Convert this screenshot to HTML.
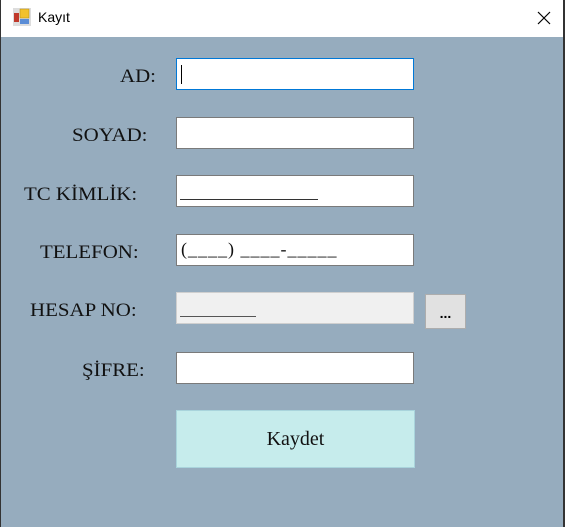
<!DOCTYPE html>
<html><head><style>
*{margin:0;padding:0;box-sizing:border-box}
body{width:565px;height:527px;overflow:hidden;background:#96acbe;position:relative;font-family:"Liberation Serif",serif}
.frame{position:absolute;left:0;top:0;width:565px;height:527px;border-left:1px solid #333;border-right:2px solid #333}
.title{position:absolute;left:0;top:0;width:565px;height:37px;background:#fff;border-left:1px solid #333;border-right:2px solid #333}
.title span{position:absolute;left:37px;top:9px;font:14px "Liberation Sans",sans-serif;color:#000}
.lbl{position:absolute;font-size:19px;color:#111;transform:scaleX(1.1);transform-origin:left top;white-space:nowrap}
.tb{position:absolute;left:176px;width:238px;height:32px;background:#fff;border:1px solid #7a7a7a}
.mask{position:absolute;left:4px;font-size:18px;color:#111;font-family:"Liberation Serif",serif;letter-spacing:1px;white-space:nowrap}
</style></head><body>
<div class="frame"></div>
<div class="title">
<svg style="position:absolute;left:12px;top:8px" width="18" height="18" viewBox="0 0 18 18">
<rect x="0" y="0" width="18" height="18" fill="#ddd"/>
<rect x="7" y="1" width="9" height="9" fill="#f2c12e" stroke="#b08a10" stroke-width="0.5"/>
<rect x="1" y="5" width="5" height="9" fill="#c0392b"/>
<rect x="7" y="11" width="9" height="5" fill="#5b8dd6"/>
</svg>
<span>Kayıt</span>
<svg style="position:absolute;left:536px;top:11px" width="14" height="14" viewBox="0 0 14 14"><path d="M1 1L13 13M13 1L1 13" stroke="#000" stroke-width="1.2"/></svg>
</div>

<div class="lbl" style="left:120px;top:66px">AD:</div>
<div class="lbl" style="left:72px;top:125px">SOYAD:</div>
<div class="lbl" style="left:24px;top:184px">TC KİMLİK:</div>
<div class="lbl" style="left:40px;top:242px">TELEFON:</div>
<div class="lbl" style="left:30px;top:300px">HESAP NO:</div>
<div class="lbl" style="left:82px;top:360px">ŞİFRE:</div>

<div class="tb" style="top:58px;border-color:#0078d7"><div style="position:absolute;left:4px;top:6px;width:1px;height:19px;background:#000"></div></div>
<div class="tb" style="top:117px"></div>
<div class="tb" style="top:175px"><div style="position:absolute;left:3px;top:23px;width:138px;height:1px;background:#333"></div></div>
<div class="tb" style="top:234px"><div class="mask" style="top:4px">(____) ____-_____</div></div>
<div class="tb" style="top:292px;background:#f0f0f0;border-color:#cfcfcf"><div style="position:absolute;left:3px;top:23px;width:76px;height:1px;background:#555"></div></div>
<div style="position:absolute;left:425px;top:294px;width:41px;height:35px;background:#e1e1e1;border:1px solid #adadad;font:bold 14px 'Liberation Sans',sans-serif;text-align:center;line-height:36px">...</div>
<div class="tb" style="top:352px"></div>
<div style="position:absolute;left:176px;top:410px;width:239px;height:58px;background:#c6ecec;border:1px solid #a9d4dc;font-size:20px;color:#111;text-align:center;line-height:56px">Kaydet</div>
</body></html>
